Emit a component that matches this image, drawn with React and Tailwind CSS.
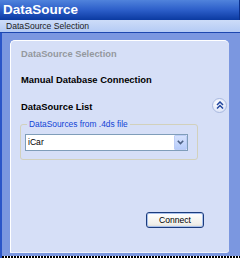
import { useState } from "react"

const ChevronsUp = () => (
    <svg width="8" height="8" viewBox="0 0 8 8" fill="none">
        <path d="M1 4 L4 1 L7 4" stroke="#21469f" strokeWidth="1.5" />
        <path d="M1 7.5 L4 4.5 L7 7.5" stroke="#21469f" strokeWidth="1.5" />
    </svg>
)

const ChevronDown = () => (
    <svg width="7" height="5" viewBox="0 0 7 5" fill="none">
        <path d="M0.8 0.8 L3.5 3.6 L6.2 0.8" stroke="#4d6185" strokeWidth="1.6" />
    </svg>
)

const App = () => {
    const [source, setSource] = useState("iCar")

    return (
        <div className="w-[240px] h-[258px] overflow-hidden flex flex-col font-['Liberation_Sans',Arial,sans-serif] select-none">
            {/* Title bar */}
            <div className="h-[20px] flex items-center pl-[3px] border-r border-[#0b2f8a] bg-[linear-gradient(180deg,#5083dc_0%,#2c5ec9_50%,#0b3aa1_100%)]">
                <span className="text-white font-bold text-[13.5px] leading-none">DataSource</span>
            </div>
            {/* Sub bar */}
            <div className="h-[13px] flex items-center pl-[6px] border-b border-[#1d47b0] bg-[linear-gradient(180deg,#cddcf8,#b4caf4)]">
                <span className="text-[#1b1b1b] text-[8.6px] leading-none">DataSource Selection</span>
            </div>
            {/* Body */}
            <div className="flex-1 flex flex-col bg-[#7b97e0] border-l-2 border-[#2a55c8]">
                <div className="ml-[8px] mt-[7px] w-[219px] h-[212px] flex flex-col bg-[#d6dff7] border-l border-t border-white rounded-t-[5px] rounded-br-[3px] shadow-[0_1px_0_#eef2fc]">
                    <div className="h-[28px] flex items-center pl-[10px]">
                        <span className="text-[#94989e] font-bold text-[9.3px] leading-none">DataSource Selection</span>
                    </div>
                    <div className="h-[22px] flex items-center pl-[10px]">
                        <span className="text-black font-bold text-[9.4px] leading-none">Manual Database Connection</span>
                    </div>
                    <div className="mt-[6px] h-[20px] flex items-center justify-between pl-[10px] pr-[2px]">
                        <span className="text-black font-bold text-[9.4px] leading-none">DataSource List</span>
                        <button className="mb-[4px] w-[15px] h-[15px] rounded-full border border-[#a9b9df] bg-[radial-gradient(circle_at_40%_35%,#ffffff,#dfe6f8_70%,#c3cff0)] flex items-center justify-center">
                            <ChevronsUp />
                        </button>
                    </div>
                    <fieldset className="mt-[2px] ml-[9px] w-[178px] border border-[#d2d1bc] rounded-[3px] pl-[4px] pb-[8px]">
                        <legend className="ml-[2px] px-[2px] text-[#1244d6] text-[8.4px] leading-[10px]">DataSources from .4ds file</legend>
                        <div className="mt-[5px] w-[163px] h-[17px] flex items-center bg-white border border-[#7f9db9]">
                            <span className="flex-1 pl-[2px] text-black text-[8.6px] leading-none">{source}</span>
                            <button
                                onClick={() => setSource(source)}
                                className="w-[13px] h-[15px] flex items-center justify-center border border-[#bccdf6] rounded-[1px] bg-[linear-gradient(180deg,#d6e2fd,#b7ccfa)]"
                            >
                                <ChevronDown />
                            </button>
                        </div>
                    </fieldset>
                    <div className="mt-[52px] flex justify-end pr-[25px]">
                        <button className="w-[58px] h-[16px] rounded-[3px] border border-[#1c3c7c] bg-[linear-gradient(180deg,#ffffff,#f0efea_80%,#dcdad2)] shadow-[inset_0_0_0_1px_#a8c0ec] text-black text-[8.6px] leading-none">
                            Connect
                        </button>
                    </div>
                </div>
                <div className="mt-auto h-[2px] bg-[repeating-linear-gradient(90deg,#000_0_2px,#fff_2px_3px)]" />
            </div>
        </div>
    )
}

export default App
